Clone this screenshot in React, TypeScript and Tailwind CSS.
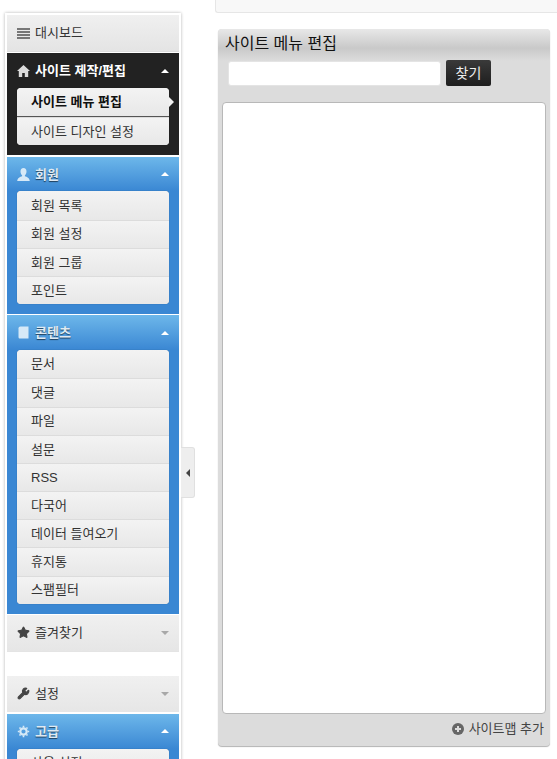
import { Star, Wrench } from 'lucide-react';
import type { ReactNode } from 'react';

const font = { fontFamily: '"Liberation Sans", "Noto Sans CJK KR", sans-serif' };

function Caret({ up, light }: { up: boolean; light: boolean }) {
  return (
    <span
      className={`ml-auto mr-[10px] h-0 w-0 border-x-[4px] border-x-transparent ${
        up ? 'border-b-[4px]' : 'border-t-[4px]'
      } ${light ? 'border-b-white' : 'border-t-[#a8a8a8]'}`}
    />
  );
}

function HomeIcon() {
  return (
    <svg width="13" height="12" viewBox="0 0 13 12" fill="#dcdcdc">
      <path d="M6.5 0 L13 6 L11.2 6 L11.2 12 L7.8 12 L7.8 8 L5.2 8 L5.2 12 L1.8 12 L1.8 6 L0 6 Z" />
    </svg>
  );
}

function UserIcon() {
  return (
    <svg width="13" height="13" viewBox="0 0 13 13" fill="#d6e9f7">
      <path d="M6.5 0 C8.4 0 9.5 1.4 9.5 3.4 C9.5 5.2 8.7 6.6 7.9 7.3 L7.9 8.2 C10 8.9 12.4 9.8 12.8 13 L0.2 13 C0.6 9.8 3 8.9 5.1 8.2 L5.1 7.3 C4.3 6.6 3.5 5.2 3.5 3.4 C3.5 1.4 4.6 0 6.5 0 Z" />
    </svg>
  );
}

function BookIcon() {
  return (
    <svg width="13" height="13" viewBox="0 0 13 13" fill="#d6e9f7">
      <path d="M3.5 0.5 L11.5 0.5 L11.5 12.5 L3 12.5 C2 12.5 1.5 12 1.5 11 L1.5 2.5 C1.5 1.2 2.2 0.5 3.5 0.5 Z" />
    </svg>
  );
}

function GearIcon() {
  return (
    <svg width="13" height="13" viewBox="0 0 13 13" fill="none" stroke="#d6e9f7">
      <circle cx="6.5" cy="6.5" r="3.2" strokeWidth="2.2" />
      <path d="M6.5 0.8 V2.4 M6.5 10.6 V12.2 M0.8 6.5 H2.4 M10.6 6.5 H12.2 M2.5 2.5 L3.6 3.6 M9.4 9.4 L10.5 10.5 M2.5 10.5 L3.6 9.4 M9.4 3.6 L10.5 2.5" strokeWidth="1.6" />
    </svg>
  );
}

function SubList({ items, active, rowClass }: { items: string[]; active?: string; rowClass: string }) {
  return (
    <ul className="mx-[10px] rounded-[4px] bg-[#ececec] shadow-[0_0_1px_rgba(0,0,0,0.4)]">
      {items.map((item, i) => (
        <li
          key={item}
          className={`relative flex items-center bg-gradient-to-b from-[#f3f3f3] to-[#e8e8e8] pl-[14px] text-[13px] ${rowClass} ${
            i > 0 ? 'border-t border-[#dcdcdc]' : ''
          } ${i === 0 ? 'rounded-t-[4px]' : ''} ${i === items.length - 1 ? 'rounded-b-[4px]' : ''} ${
            item === active ? 'border-b border-b-[#555] font-bold text-[#111]' : 'text-[#333]'
          }`}
        >
          {item}
          {item === active && (
            <span className="absolute -right-[5px] top-[9px] h-0 w-0 border-y-[5px] border-l-[5px] border-y-transparent border-l-[#f2f2f2]" />
          )}
        </li>
      ))}
    </ul>
  );
}

function Section({
  icon,
  title,
  tone,
  items,
  active,
  headerClass = 'h-[35px]',
  rowClass = 'h-[28.2px]',
}: {
  icon: ReactNode;
  title: string;
  tone: 'dark' | 'blue' | 'plain';
  items?: string[];
  active?: string;
  headerClass?: string;
  rowClass?: string;
}) {
  const open = tone !== 'plain';
  return (
    <section
      className={
        tone === 'dark' ? 'bg-[#222]' : tone === 'blue' ? 'border-t border-white bg-[#3a87d3]' : ''
      }
    >
      <header
        className={`flex items-center gap-[5px] pl-[10px] text-[13px] ${headerClass} ${
          tone === 'dark'
            ? 'font-bold text-white'
            : tone === 'blue'
              ? 'bg-gradient-to-b from-[#6db7ea] to-[#3a87d3] font-bold text-[#dfeaf3] [text-shadow:0_1px_1px_rgba(0,0,0,0.6)]'
              : 'bg-gradient-to-b from-[#f0f0f0] to-[#e6e6e6] text-[#333]'
        }`}
      >
        {icon}
        {title}
        <Caret up={open} light={open} />
      </header>
      {items && <SubList items={items} active={active} rowClass={rowClass} />}
      {items && <div className="h-[10px]" />}
    </section>
  );
}

export default function App() {
  return (
    <div className="relative flex h-[759px] overflow-hidden bg-white" style={font}>
      <aside className="ml-[5px] mt-[13px] h-[760px] w-[176px] shrink-0 border-[2px] border-b-0 border-white shadow-[0_0_3px_rgba(0,0,0,0.3)]">
        <div className="flex h-[37px] items-center gap-[5px] border-b border-[#ddd] bg-gradient-to-b from-[#f0f0f0] to-[#e4e4e4] pl-[10px] text-[13px] text-[#333]">
          <svg width="13" height="11" viewBox="0 0 13 11" fill="#777">
            <rect y="0" width="13" height="2" />
            <rect y="3" width="13" height="2" />
            <rect y="6" width="13" height="2" />
            <rect y="9" width="13" height="2" />
          </svg>
          대시보드
        </div>
        <div className="h-px bg-white" />
        <Section
          tone="dark"
          icon={<HomeIcon />}
          title="사이트 제작/편집"
          items={['사이트 메뉴 편집', '사이트 디자인 설정']}
          active="사이트 메뉴 편집"
          rowClass="h-[28.7px]"
        />
        <div className="h-px bg-white" />
        <Section
          tone="blue"
          icon={<UserIcon />}
          title="회원"
          headerClass="h-[34px]"
          items={['회원 목록', '회원 설정', '회원 그룹', '포인트']}
        />
        <Section
          tone="blue"
          icon={<BookIcon />}
          title="콘텐츠"
          items={['문서', '댓글', '파일', '설문', 'RSS', '다국어', '데이터 들여오기', '휴지통', '스팸필터']}
        />
        <div className="h-px bg-white" />
        <Section tone="plain" headerClass="h-[36px]" icon={<Star size={13} fill="#444" stroke="#444" />} title="즐겨찾기" />
        <div className="h-[25px] border-t border-[#e4e4e4] bg-white" />
        <Section tone="plain" headerClass="h-[36px]" icon={<Wrench size={13} fill="#444" stroke="#444" />} title="설정" />
        <div className="h-px bg-white" />
        <Section tone="blue" icon={<GearIcon />} title="고급" items={['사용 설정']} />
      </aside>

      {/* sidebar collapse handle */}
      <button className="absolute left-[181px] top-[447px] flex h-[51px] w-[14px] items-center justify-center rounded-r-[3px] border border-l-0 border-[#e0e0e0] bg-[#eee]">
        <span className="h-0 w-0 border-y-[4px] border-r-[4px] border-y-transparent border-r-[#444]" />
      </button>

      <main className="ml-[34px] flex min-w-0 flex-1 flex-col">
        <div className="h-[13px] rounded-bl-[3px] border-b border-l border-[#e6e6e6] bg-[#f8f8f8]" />
        <div className="ml-[3px] mr-[7px] mt-[16px] h-[717px] rounded-[4px] bg-[#dcdcdc] shadow-[0_1px_1px_rgba(0,0,0,0.3)]">
          <div className="h-[32px] rounded-t-[4px] bg-gradient-to-b from-[#e8e8e8] via-[#c9c9c9] via-60% to-[#dcdcdc] pl-[7px] pt-[4px]">
            <h1 className="text-[16px] leading-[22px] font-normal text-[#111]">사이트 메뉴 편집</h1>
          </div>
          <div className="-mt-px flex items-center gap-[5px] pl-[10px]">
            <input className="h-[25px] w-[213px] rounded-[3px] border border-[#e4e4e4] bg-white" />
            <button className="h-[26px] w-[45px] rounded-[2px] bg-gradient-to-b from-[#3a3a3a] to-[#1e1e1e] text-[14px] text-[#eee]">
              찾기
            </button>
          </div>
          <div className="mx-[4px] mt-[16px] h-[612px] rounded-[4px] border border-[#b8b8b8] bg-white" />
          <div className="flex items-center justify-end gap-[5px] pr-[6px] pt-[7px] text-[13px] leading-[16px] text-[#444]">
            <svg width="12" height="12" viewBox="0 0 12 12">
              <circle cx="6" cy="6" r="6" fill="#666" />
              <path d="M6 3 V9 M3 6 H9" stroke="#dcdcdc" strokeWidth="2" />
            </svg>
            사이트맵 추가
          </div>
        </div>
      </main>
    </div>
  );
}
